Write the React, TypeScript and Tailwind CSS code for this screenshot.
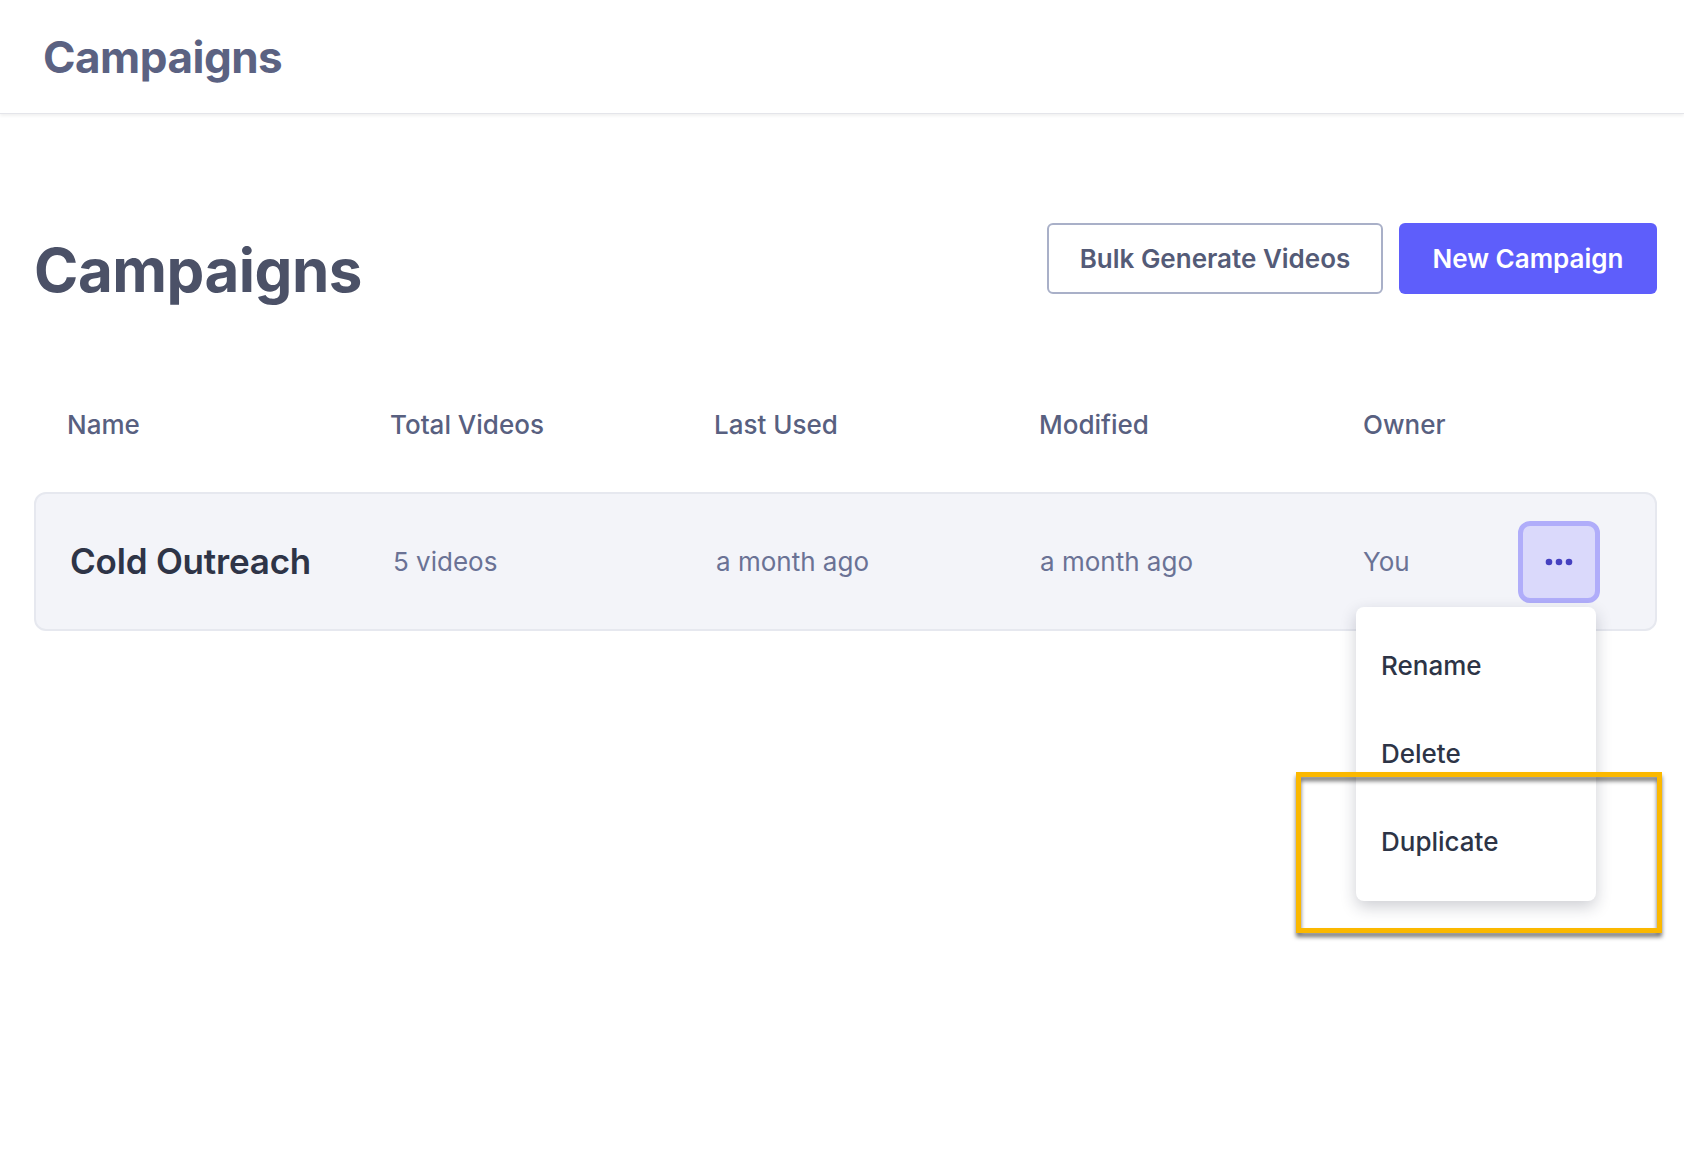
const font = { fontFamily: 'Inter, "Noto Sans", sans-serif' };

const columns = ['Name', 'Total Videos', 'Last Used', 'Modified', 'Owner'];

function Dots() {
  return (
    <svg width="28" height="8" viewBox="0 0 28 8" fill="currentColor">
      <circle cx="4" cy="4" r="3.3" />
      <circle cx="14" cy="4" r="3.3" />
      <circle cx="24" cy="4" r="3.3" />
    </svg>
  );
}

export default function App() {
  return (
    <div className="relative min-h-[1156px] w-full bg-white" style={font}>
      {/* top bar */}
      <header className="flex h-[114px] items-center border-b border-[#e4e5ea] px-[43px] shadow-[0_2px_3px_rgba(0,0,0,0.06)]">
        <h1 className="text-[44px] font-bold tracking-[-0.5px] text-[#5b6282]">Campaigns</h1>
      </header>

      <main className="pl-[34px] pr-[27px]">
        <div className="mt-[109px] flex items-start justify-between">
          <h2 className="mt-[17px] text-[60px] font-bold leading-none tracking-[-0.5px] text-[#4b5167]">Campaigns</h2>
          <div className="flex gap-[16px]">
            <button className="h-[71px] w-[336px] rounded-[6px] border-2 border-[#a9b0c8] bg-white text-[26px] font-semibold text-[#545b77]">
              Bulk Generate Videos
            </button>
            <button className="h-[71px] w-[258px] rounded-[6px] bg-[#5e5efb] text-[26px] font-semibold text-white">
              New Campaign
            </button>
          </div>
        </div>

        {/* table head */}
        <div className="mt-[105px] grid grid-cols-[323px_324px_325px_324px_1fr] pl-[33px] text-[26px] font-medium text-[#586080]">
          {columns.map((c) => (
            <div key={c}>{c}</div>
          ))}
        </div>

        {/* row */}
        <div className="mt-[48px] grid h-[139px] grid-cols-[323px_323px_324px_323px_1fr] items-center rounded-[12px] border-2 border-[#e6e8ef] bg-[#f3f4f9] pl-[34px] pr-[55px]">
          <div className="text-[35px] font-semibold tracking-[-0.2px] text-[#2e3447]">Cold Outreach</div>
          <div className="text-[26px] text-[#6a7295]">5 videos</div>
          <div className="text-[26px] text-[#6a7295]">a month ago</div>
          <div className="text-[26px] text-[#6a7295]">a month ago</div>
          <div className="flex items-center justify-between">
            <span className="text-[26px] text-[#6a7295]">You</span>
            <div className="relative">
              <button className="flex h-[82px] w-[82px] items-center justify-center rounded-[12px] border-[5px] border-[#b0adfa] bg-[#dad9fb] text-[#4540c0]">
                <Dots />
              </button>
              <div className="absolute right-[4px] top-[86px] z-10 w-[240px] rounded-[8px] bg-white py-[15px] shadow-[0_6px_16px_rgba(30,35,60,0.22)]">
                {['Rename', 'Delete', 'Duplicate'].map((m) => (
                  <div key={m} className="flex h-[88px] items-center pl-[25px] text-[26px] font-medium text-[#2d3446]">
                    {m}
                  </div>
                ))}
              </div>
            </div>
          </div>
        </div>
      </main>

      {/* annotation highlight */}
      <div className="absolute left-[1296px] top-[772px] z-20 h-[161px] w-[366px] border-[5px] border-[#fbb800] [filter:drop-shadow(0_4px_2px_rgba(0,0,0,0.55))]" />
    </div>
  );
}
